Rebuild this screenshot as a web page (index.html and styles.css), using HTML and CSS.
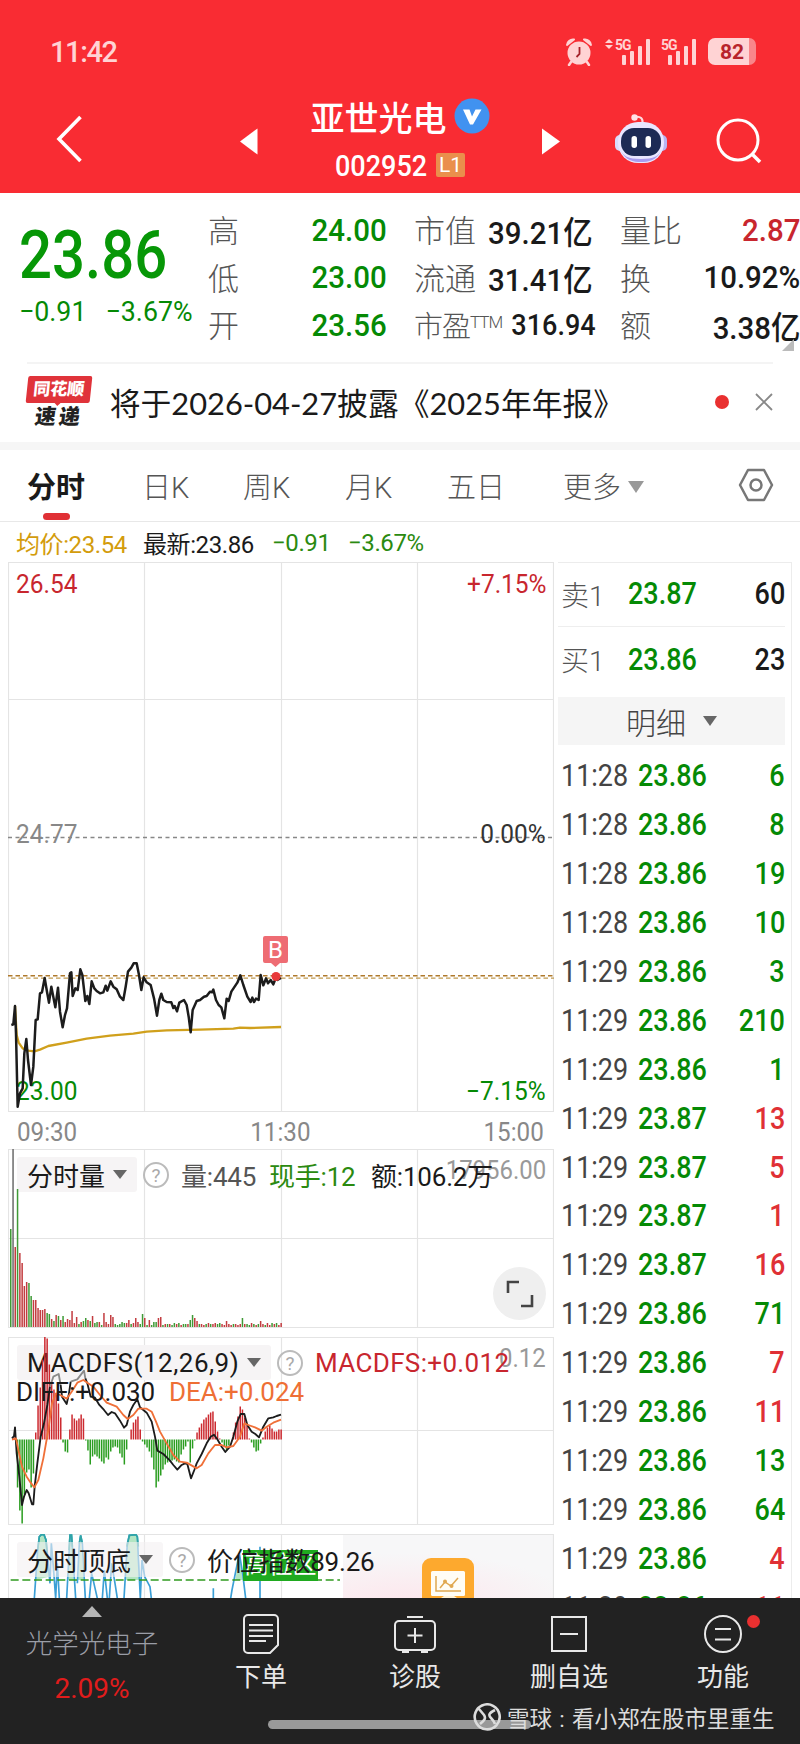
FILE: index.html
```html
<!DOCTYPE html>
<html lang="zh-CN">
<head>
  <meta charset="UTF-8">
  <title>亚世光电 002952</title>
  <link rel="stylesheet" href="styles.css">
</head>
<body>

<!-- header -->
<header class="top">
  <div class="status">
    <span class="clock">11:42</span>
    <svg class="alarm" width="28" height="28" viewBox="0 0 28 28">
      <circle cx="14" cy="15" r="11.500" fill="#ffd3d4"/>
      <path d="M2 7a6 6 0 0 1 7-5.500zM26 7a6 6 0 0 0-7-5.500z" fill="#ffd3d4" stroke="#ffd3d4" stroke-width="2" stroke-linejoin="round"/>
      <path d="M6 24l-2 3M22 24l2 3" stroke="#ffd3d4" stroke-width="2.500" stroke-linecap="round"/>
      <path d="M14.500 9v7l-3 3" stroke="#a5222a" stroke-width="1.800" fill="none"/>
    </svg>
    <svg class="signal" width="46" height="28" viewBox="0 0 46 28" fill="#ffd3d4">
      <path d="M0 5l4-4 4 4zM0 7l4 4 4-4z"/>
      <text x="10" y="11.500" class="net">5G</text>
      <rect x="17" y="17" width="4" height="10" rx="1"/><rect x="25" y="13" width="4" height="14" rx="1"/>
      <rect x="33" y="8" width="4" height="19" rx="1"/><rect x="41" y="1" width="4" height="26" rx="1"/>
    </svg>
    <svg class="signal second" width="36" height="28" viewBox="0 0 36 28" fill="#ffd3d4">
      <text x="0" y="11.500" class="net">5G</text>
      <rect x="7" y="17" width="4" height="10" rx="1"/><rect x="15" y="13" width="4" height="14" rx="1"/>
      <rect x="23" y="8" width="4" height="19" rx="1"/><rect x="31" y="1" width="4" height="26" rx="1"/>
    </svg>
    <div class="battery">82</div>
  </div>
  <nav class="nav">
    <svg class="back" width="26" height="48" viewBox="0 0 26 48"><path d="M24.500 2L3 24l21.500 22" fill="none" stroke="#fff" stroke-width="3.600"/></svg>
    <svg class="prev" width="18" height="27" viewBox="0 0 18 27"><path d="M0 13.500L17.500 0.500v26z" fill="#fff"/></svg>
    <div class="title">
      <div class="name">亚世光电
        <svg width="36" height="36" viewBox="0 0 36 36"><circle cx="18" cy="18" r="17.500" fill="#4192f0"/><path d="M9 11.500h6.500l2.500 7 3.500-7h6l-8.500 15h-3z" fill="#fff"/></svg>
      </div>
      <div class="code"><span class="code-num">002952</span><span class="level">L1</span></div>
    </div>
    <svg class="next" width="18" height="27" viewBox="0 0 18 27"><path d="M18 13.500L0 0.500v26z" fill="#fff"/></svg>
    <svg class="robot" width="54" height="52" viewBox="0 0 54 52">
      <path d="M28 12c2-7-2-9-7-8" fill="none" stroke="#ffd9df" stroke-width="2.200"/>
      <circle cx="20.500" cy="4.500" r="3.200" fill="#ffe3e8"/>
      <rect x="1" y="22" width="10" height="16" rx="5" fill="#d9dcfb"/><rect x="43" y="22" width="10" height="16" rx="5" fill="#b9b4f2"/>
      <rect x="4" y="9" width="46" height="41" rx="20" fill="#e9e6ff"/>
      <path d="M6 36c5 12 14 13 21 13s16-1 21-13c-3 7-8 10-21 10S9 43 6 36z" fill="#a99cf0"/>
      <rect x="7" y="15" width="40" height="28" rx="13" fill="#1d2a55"/>
      <rect x="17.500" y="23" width="5.500" height="12" rx="2.700" fill="#fff"/><rect x="31.500" y="23" width="5.500" height="12" rx="2.700" fill="#fff"/>
    </svg>
    <svg class="search" width="46" height="46" viewBox="0 0 46 46" fill="none" stroke="#fff" stroke-width="3"><circle cx="22" cy="22" r="20"/><path d="M36 36l8 8" stroke-width="3.600"/></svg>
  </nav>
</header>

<!-- quote -->
<section class="quote">
  <div class="last">
    <div class="price">23.86</div>
    <div class="change"><span>−0.91</span><span>−3.67%</span></div>
  </div>
  <div class="stats">
    <div><label>高</label><b class="green">24.00</b></div>
    <div><label>市值</label><b>39.21亿</b></div>
    <div><label>量比</label><b class="red">2.87</b></div>
    <div><label>低</label><b class="green">23.00</b></div>
    <div><label>流通</label><b>31.41亿</b></div>
    <div><label>换</label><b>10.92%</b></div>
    <div><label>开</label><b class="green">23.56</b></div>
    <div><label class="pe">市盈<sup>TTM</sup></label><b class="pev">316.94</b></div>
    <div><label>额</label><b>3.38亿</b></div>
  </div>
  <i class="corner"></i>
</section>

<!-- notice -->
<section class="notice">
  <div class="logo"><span class="logo-top">同花顺</span><span class="logo-sub">速递</span></div>
  <span class="msg">将于2026-04-27披露《2025年年报》</span>
  <i class="dot"></i>
  <svg class="close" width="18" height="18" viewBox="0 0 18 18"><path d="M1 1l16 16M17 1L1 17" stroke="#888" stroke-width="1.800"/></svg>
</section>

<!-- tabs -->
<section class="tabs">
  <span class="tab active">分时</span>
  <span class="tab">日K</span>
  <span class="tab">周K</span>
  <span class="tab">月K</span>
  <span class="tab">五日</span>
  <span class="tab">更多<i class="caret"></i></span>
  <svg width="36" height="34" viewBox="0 0 36 34" fill="none" stroke="#777" stroke-width="2.500"><path d="M10 2h16l8 15-8 15H10L2 17z" stroke-linejoin="round"/><circle cx="18" cy="17" r="5.500"/></svg>
</section>

<main class="main">
  <div class="charts">
    <div class="legend">
      <span class="gold">均价:23.54</span><span>最新:23.86</span><span class="lgreen">−0.91</span><span class="lgreen">−3.67%</span>
    </div>

    <!-- price -->
    <div class="panel price-panel">
      <svg width="546" height="550" viewBox="0 0 546 550">
        <path class="grid" d="M.5 0v550M136.500 0v550M273.500 0v550M409.500 0v550M545.500 0v550M0 .5h546M0 137.500h546M0 549.500h546"/>
        <path d="M0 275.500h546" stroke="#888" stroke-width="1.500" stroke-dasharray="4 3.500"/>
        <path d="M0 413.700h546" stroke="#b07a2c" stroke-width="1.500" stroke-dasharray="4.500 3"/>
        <path d="M3 416.200h543" stroke="#c09a50" stroke-width="1.200" stroke-dasharray="4.500 3"/>
      </svg>
      <span class="lab tl red">26.54</span>
      <span class="lab tr red">+7.15%</span>
      <span class="lab ml">24.77</span>
      <span class="lab mr">0.00%</span>
      <span class="lab bl dgreen">23.00</span>
      <span class="lab br dgreen">−7.15%</span>
      <svg class="over" width="546" height="550" viewBox="0 0 546 550">
        <g transform="translate(-8 358) scale(.33333)" fill="none" stroke-linejoin="round">
          <polyline stroke="#d0a01c" stroke-width="7" points="45,258 50,345 56,368 68,385 85,392 103,394 120,389 145,378 200,368 260,356 330,347 400,341 440,335 500,331 600,329 700,326 720,323 750,324 843,321"/>
          <polyline stroke="#1c1c1c" stroke-width="7.500" points="34,315 40,313 45,258 48,340 53,560 60,520 68,505 73,400 79,357 84,420 93,495 100,440 107,300 113,298 120,220 126,217 134,174 141,215 147,248 154,200 166,262 174,203 180,275 188,322 195,285 201,265 210,160 214,157 218,228 226,205 233,210 241,148 247,165 256,243 262,228 268,252 275,184 283,205 290,213 300,220 310,217 317,197 322,212 332,184 340,200 350,208 360,230 370,240 377,200 384,155 394,143 401,130 410,130 417,165 424,210 431,172 440,187 452,195 462,235 471,287 478,240 484,221 490,240 500,246 514,247 520,264 524,258 531,274 538,248 552,240 560,255 566,290 572,337 578,270 590,243 600,240 612,230 620,228 630,215 636,217 640,209 648,240 656,255 664,262 673,295 680,236 686,243 694,215 702,203 712,188 721,166 730,195 742,230 752,246 757,233 762,246 768,236 776,240 782,165 790,196 798,175 804,190 812,180 820,193 828,172 832,180 843,174"/>
        </g>
        <path d="M257 374h21a2 2 0 0 1 2 2v23a2 2 0 0 1-2 2h-6l-4.500 4-4.500-4h-6a2 2 0 0 1-2-2v-23a2 2 0 0 1 2-2z" fill="#ee6c73"/>
        <text x="267.500" y="396" class="flag">B</text>
        <circle cx="268" cy="414.500" r="4.500" fill="#e8393a"/>
      </svg>
    </div>
    <div class="axis"><span>09:30</span><span>11:30</span><span>15:00</span></div>

    <!-- volume -->
    <div class="panel vol-panel">
      <svg width="546" height="179" viewBox="0 0 546 179">
        <path class="grid" d="M.5 0v179M136.500 0v179M273.500 0v179M409.500 0v179M545.500 0v179M0 .5h546M0 89.500h546M0 178.500h546"/>
      </svg>
      <span class="max">17956.00</span>
      <div class="head">
        <span class="chip">分时量<i class="caret"></i></span>
        <span class="help">?</span>
        <span class="txt v1">量:445</span><span class="txt v2 lgreen">现手:12</span><span class="txt v3">额:106.2万</span>
      </div>
      <svg class="over" width="546" height="179" viewBox="0 0 546 179"><g id="volBars"></g></svg>
      <div class="expand"><svg width="28" height="28" viewBox="0 0 28 28" fill="none" stroke="#444" stroke-width="2.600"><path d="M2 13V2h11M26 15v11H15"/></svg></div>
    </div>

    <!-- macd -->
    <div class="panel macd-panel">
      <svg width="546" height="188" viewBox="0 0 546 188">
        <path class="grid" d="M.5 0v188M136.500 0v188M273.500 0v188M409.500 0v188M545.500 0v188M0 .5h546M0 93.500h546M0 187.500h546"/>
      </svg>
      <span class="max">0.12</span>
      <div class="head">
        <span class="chip macd-chip">MACDFS(12,26,9)<i class="caret"></i></span>
        <span class="help">?</span>
        <span class="txt m1 red">MACDFS:+0.012</span>
      </div>
      <svg class="over" width="546" height="188" viewBox="0 0 546 188">
        <g id="macdBars"></g>
        <g transform="translate(-8 -7) scale(.33333)" fill="none" stroke-linejoin="round" stroke-width="5.500">
          <polyline stroke="#1c1c1c" points="36,325 42,318 45,292 50,370 58,440 66,525 72,500 80,480 86,490 96,523 100,523 104,470 112,400 122,320 132,280 142,225 150,170"/>
          <polyline stroke="#8a8a8a" points="150,170 160,140 176,132 182,165"/>
          <polyline stroke="#1c1c1c" points="182,165 186,200 200,222 207,190 212,155"/>
          <polyline stroke="#8a8a8a" points="212,155 232,148 252,122 256,145"/>
          <polyline stroke="#1c1c1c" points="256,145 262,160 272,200 285,203 298,225 312,240 324,255 335,246 345,250 360,272 372,293 380,285 390,245 400,225 412,208 420,232 440,248 455,275 465,320 472,362 490,372 510,392 520,405 532,419 545,405 555,400 562,402 573,445 583,420 590,400 605,372 620,340 632,320 642,314 652,328 665,350 676,366 690,350 700,320 712,275 722,252 733,252 742,285 755,305 766,312 777,322 790,290 805,265 820,262 830,258 843,254"/>
          <polyline stroke="#f07038" points="36,329 48,325 55,360 66,410 80,440 92,458 103,472 115,450 130,385 145,300 156,220 168,190 180,195 200,206 215,185 232,158 250,150 262,158 280,170 300,195 320,218 350,230 370,255 383,267 400,255 415,236 440,236 455,245 468,275 480,305 500,340 520,375 540,395 560,398 590,415 605,405 625,370 645,345 665,345 680,352 700,348 720,320 733,280 745,285 765,292 785,302 800,290 820,278 843,269"/>
        </g>
      </svg>
      <div class="sub"><span class="d1">DIFF:+0.030</span><span class="d2">DEA:+0.024</span></div>
    </div>

    <!-- top / bottom index -->
    <div class="panel idx-panel">
      <svg width="546" height="64" viewBox="0 0 546 64">
        <defs>
          <radialGradient id="pink" cx=".3" cy="1.1" r=".8"><stop offset="0" stop-color="#fde6ec"/><stop offset="1" stop-color="#f7f7f8"/></radialGradient>
        </defs>
        <rect x="335" y="0" width="211" height="64" fill="url(#pink)"/>
        <path class="grid" d="M.5 0v64M136.500 0v64M273.500 0v64M545.500 0v64M0 .5h546"/>
        <rect x="414" y="24" width="52" height="60" rx="9" fill="#fda92e"/>
        <rect x="423" y="37" width="34" height="25" rx="1.500" fill="#fffdf5"/>
        <path d="M428 42v15h25M432 54l5-6 6 4 7-8" fill="none" stroke="#e0a850" stroke-width="1.500"/>
        <circle cx="437" cy="47.500" r="2" fill="#e0a850"/><circle cx="443.500" cy="52" r="2" fill="#e0a850"/>
        <path d="M433 64l3-2h10l3 2z" fill="#fff3d8"/>
      </svg>
      <svg class="over" width="546" height="64" viewBox="0 0 546 64">
        <g transform="translate(-8 -204) scale(.33333)" fill="none" stroke-width="5">
          <path d="M106 750L118 620l6-6h8l6 16 10 110zM203 750l7-135h6l5 135zM233 750l9-134 9 134zM376 750l8-125 6-11h18l6 8 6 128zM706 750l12-80 12 80z" fill="#7fd39a" fill-opacity=".6"/>
          <path d="M103 805l10-145 5-40 6-6h8l6 16 12 130 4-120 6 70 7 95 5-105 6 105M200 805l10-190h4l3 35 10 155M232 760l6-120 4-24 5 24 9 165M268 805l7-75 9 40 8 35M307 805l6-85 9 85M328 805l7-105 10 60 7 45M372 805l10-165 6-24 20-2 4 6 9 185M421 805l5-115 8 50 16 30 4 35M640 775v30M692 805l4-25 16-80 6-30 10 60 9 75M780 805V650" stroke="#3b9fd6"/>
          <path d="M113 660l5-40 6-6h8l6 16 4 40M207 660l3-45h5l2 35M238 640l4-24 5 24M381 650l7-34 20-2 4 6 3 30" stroke="#2fa5a5"/>
          <path d="M32 750h988" stroke="#2f9a1f" stroke-dasharray="24 11"/>
        </g>
      </svg>
      <span class="zone">高位区</span>
      <div class="head">
        <span class="chip idx-chip">分时顶底<i class="caret"></i></span>
        <span class="help">?</span>
        <span class="txt i1">价位指数89.26</span>
      </div>
    </div>
  </div>

  <!-- order book and ticks -->
  <aside class="side">
    <div class="book"><span>卖1</span><b>23.87</b><em>60</em></div>
    <div class="book"><span>买1</span><b>23.86</b><em>23</em></div>
    <div class="detail">明细<i class="caret"></i></div>
    <div class="ticks" id="ticks"></div>
  </aside>
</main>

<!-- bottom bar -->
<footer class="bottom">
  <div class="sector"><i class="up"></i><span>光学光电子</span><b>2.09%</b></div>
  <div class="item">
    <svg width="36" height="40" viewBox="0 0 36 40" fill="none" stroke="#e8e8e8" stroke-width="2"><path d="M5 1h26a4 4 0 0 1 4 4v26l-8 8H5a4 4 0 0 1-4-4V5a4 4 0 0 1 4-4zM6 11h24M6 16.500h24M6 22h24M6 27h17"/></svg>
    <span>下单</span>
  </div>
  <div class="item">
    <svg width="42" height="40" viewBox="0 0 42 40" fill="none" stroke="#e8e8e8" stroke-width="2"><path d="M13 3h16" /><rect x="1" y="7" width="40" height="29" rx="4"/><path d="M21 14v15M13.500 21.500h15M8 38h7M27 38h7"/></svg>
    <span>诊股</span>
  </div>
  <div class="item">
    <svg width="36" height="40" viewBox="0 0 36 40" fill="none" stroke="#e8e8e8" stroke-width="2"><rect x="1" y="3" width="34" height="34"/><path d="M9 20h18"/></svg>
    <span>删自选</span>
  </div>
  <div class="item">
    <svg width="38" height="40" viewBox="0 0 38 40" fill="none" stroke="#e8e8e8" stroke-width="2"><circle cx="19" cy="20" r="18"/><path d="M11 15h16M11 25.500h16"/></svg>
    <span>功能</span>
    <i class="badge"></i>
  </div>
  <i class="homebar"></i>
  <div class="mark">
    <svg width="28" height="28" viewBox="0 0 28 28" fill="none" stroke="#dcdcdc" stroke-width="2.600"><path d="M9 2.500a12.500 12.500 0 1 1-6.500 7M9 2.500a12.500 12.500 0 0 0-6.500 7M6 6l5 6c2 3 1 5-4 9M22 7c-6 3-7 5-4 8 2 2 3 3 4 6"/></svg>
    <span>雪球<i>:</i>看小郑在股市里重生</span>
  </div>
</footer>

<script src="script.js"></script>
</body>
</html>
```
FILE: styles.css
```css
* { box-sizing: border-box; }
body {
  margin: 0;
  width: 800px;
  height: 1744px;
  overflow: hidden;
  display: flex;
  flex-direction: column;
  background: #fff;
  color: #1a1a1a;
  font-family: Roboto, "Noto Sans CJK SC", sans-serif;
}
i, em { font-style: normal; }
svg { display: block; flex: none; }

.red { color: #c8262e !important; }
.green, .dgreen { color: #058a05 !important; }
.lgreen { color: #2b8a10 !important; }
.gold { color: #d39c0c; }
.caret {
  display: inline-block;
  border: 7px solid transparent;
  border-top: 9px solid #666;
  border-bottom: 0;
}

/* header */
.top { height: 193px; background: #f92c33; color: #fff; flex: none; }
.status {
  display: flex;
  align-items: center;
  height: 75px;
  padding: 28px 44px 0 50px;
}
.clock { font-size: 29px; font-weight: 500; color: #ffd3d4; letter-spacing: -1.4px; width: 515px; }
.net { font: bold 14px Roboto, sans-serif; letter-spacing: -1px; }
.signal { margin-left: 12px; }
.signal.second { margin-left: 10px; }
.battery {
  margin-left: 11px;
  width: 48px;
  height: 27px;
  border-radius: 7px;
  background: linear-gradient(90deg, #ffd3d4 41px, #f9868a 41px);
  color: #b8232b;
  font-size: 21px;
  font-weight: 700;
  line-height: 28px;
  text-align: center;
}
.nav { display: flex; align-items: center; height: 118px; padding: 14px 0 0 56px; }
.back { margin-top: -4px; }
.prev { margin-left: 158px; }
.title { width: 284px; text-align: center; }
.name {
  display: flex;
  justify-content: center;
  align-items: center;
  gap: 7px;
  font-size: 34px;
  font-weight: 500;
  height: 48px;
}
.code { display: flex; justify-content: center; align-items: center; font-size: 30px; font-weight: 500; height: 50px; }
.code-num { width: 91px; transform: scaleX(0.9); transform-origin: left; }
.level {
  margin-left: 10px;
  width: 29px;
  height: 24px;
  border-radius: 2px;
  background: #ea8f4c;
  font-size: 21px;
  font-weight: 400;
  line-height: 25px;
}
.robot { margin: -4px 0 0 54px; }
.search { margin-left: 48px; }

/* quote */
.quote { position: relative; display: flex; height: 169px; flex: none; }
.last { width: 208px; padding: 24px 0 0 19px; color: #079707; white-space: nowrap; }
.price { font-size: 66px; line-height: 78px; font-weight: 500; transform: scaleX(0.88); transform-origin: left; }
.change { display: flex; gap: 20px; font-size: 28px; line-height: 34px; color: #058a05; transform: scaleX(0.955); transform-origin: left; }
.stats {
  display: grid;
  grid-template-columns: 179px 179px 180px;
  grid-auto-rows: 47.5px;
  column-gap: 27px;
  padding-top: 13px;
}
.stats div { display: flex; justify-content: space-between; align-items: center; white-space: nowrap; }
.stats label { font-size: 31px; font-weight: 300; color: #555; margin-top: -2px; }
.stats b { font-size: 32px; font-weight: 500; transform: scaleX(0.92); transform-origin: right; }
.stats .pe { font-size: 29px; letter-spacing: -1px; }
.stats .pev { font-size: 30px; transform: scaleX(0.9); }
.pe sup { font-size: 17px; vertical-align: 9px; line-height: 0; }
.corner {
  position: absolute;
  right: 6px;
  bottom: 11px;
  border: 6px solid #bbb;
  border-top-color: transparent;
  border-left-color: transparent;
}

/* notice */
.notice {
  display: flex;
  align-items: center;
  height: 80px;
  margin: 0 27px;
  padding-bottom: 3px;
  border-top: 2px solid #f4f4f4;
  flex: none;
}
.logo { display: flex; flex-direction: column; width: 64px; margin: 4px 19px 0 0; }
.logo-top {
  position: relative;
  background: #e0333a;
  color: #fff;
  font-size: 17px;
  font-weight: 900;
  line-height: 27px;
  height: 27px;
  text-align: center;
  transform: skewX(-6deg);
  border-radius: 2px;
}
.logo-top::after {
  content: "";
  position: absolute;
  left: 28px;
  top: 26px;
  border: 4px solid transparent;
  border-top-color: #e0333a;
  border-bottom: 0;
}
.logo-sub { font-size: 21px; font-weight: 900; line-height: 28px; text-align: center; letter-spacing: 3px; transform: skewX(-8deg); color: #222; }
.msg { font: 30.8px Lato, "Noto Sans CJK SC", sans-serif; width: 608px; white-space: nowrap; font-weight: 400; }
.dot { width: 14px; height: 14px; border-radius: 50%; background: #e93030; }
.close { margin-left: 26px; }

/* tabs */
.tabs {
  display: flex;
  align-items: center;
  height: 80px;
  border-top: 8px solid #f6f6f6;
  border-bottom: 1px solid #e8e8e8;
  padding: 0 0 1px 27px;
  font-size: 29px;
  font-weight: 300;
  color: #555;
  flex: none;
}
.tab { position: relative; white-space: nowrap; }
.tab.active { font-weight: 700; color: #1a1a1a; width: 115px; }
.tab.active::after {
  content: "";
  position: absolute;
  left: 16px;
  bottom: -14px;
  width: 27px;
  height: 7px;
  border-radius: 4px;
  background: #e03035;
}
.tab:nth-child(2) { width: 101px; }
.tab:nth-child(3) { width: 102px; }
.tab:nth-child(4) { width: 102px; }
.tab:nth-child(5) { width: 116px; }
.tab:nth-child(6) { width: 175px; }
.tab .caret { border-width: 12px 8px 0; border-top-color: #999; margin-left: 7px; vertical-align: 5px; }

/* charts */
.main { display: flex; height: 1076px; overflow: hidden; flex: none; }
.charts { width: 554px; padding-left: 8px; flex: none; }
.legend { display: flex; align-items: center; height: 40px; padding: 1px 0 0 8px; font-size: 24px; letter-spacing: -0.4px; white-space: nowrap; }
.legend span:nth-child(1) { width: 127px; }
.legend span:nth-child(2) { width: 129px; }
.legend span:nth-child(3) { width: 76px; }
.panel { position: relative; width: 546px; }
.over { position: absolute; left: 0; top: 0; }
.grid { fill: none; stroke: #e4e4e4; stroke-width: 1.2; }
.price-panel { height: 550px; }
.vol-panel { height: 179px; margin-bottom: 9px; }
.macd-panel { height: 188px; margin-bottom: 9px; }
.idx-panel { height: 64px; }
.lab { position: absolute; font-size: 26px; line-height: 30px; transform: scaleX(0.94); transform-origin: left; }
.tl { left: 8px; top: 7px; }
.tr { right: 8px; top: 7px; transform-origin: right; }
.ml { left: 8px; top: 257px; color: #888; }
.mr { right: 8px; top: 257px; color: #333; transform-origin: right; }
.bl { left: 8px; bottom: 6px; }
.br { right: 8px; bottom: 6px; transform-origin: right; }
.flag { font: 24px Roboto, sans-serif; fill: #fff; text-anchor: middle; }
.axis {
  display: flex;
  justify-content: space-between;
  align-items: center;
  height: 37px;
  padding: 2px 10px 0 9px;
  font-size: 26px;
  color: #888;
}
.axis span { transform: scaleX(0.93); }
.axis span:first-child { transform-origin: left; }
.axis span:last-child { transform-origin: right; }
.head { position: absolute; left: 9px; top: 8px; display: flex; align-items: center; height: 35px; white-space: nowrap; }
.chip {
  display: flex;
  align-items: center;
  width: 120px;
  height: 35px;
  padding-left: 10px;
  border-radius: 3px;
  background: #f6f4f5;
  font-size: 26px;
}
.chip .caret { margin-left: 8px; }
.help {
  width: 26px;
  height: 26px;
  margin-left: 6px;
  border: 2px solid #bbb;
  border-radius: 50%;
  color: #aaa;
  font-size: 19px;
  line-height: 23px;
  text-align: center;
}
.txt { font-size: 26px; letter-spacing: -0.2px; }
.v1 { margin-left: 12px; width: 88px; color: #555; }
.v2 { width: 102px; }
.max { position: absolute; right: 8px; top: 6px; font-size: 26px; line-height: 30px; color: #999; transform: scaleX(0.92); transform-origin: right; }
.expand {
  position: absolute;
  right: 8px;
  bottom: 8px;
  display: flex;
  justify-content: center;
  align-items: center;
  width: 53px;
  height: 53px;
  border-radius: 50%;
  background: #efefef;
}
.macd-chip { width: 254px; letter-spacing: 0.5px; }
.m1 { margin-left: 12px; letter-spacing: 0.35px; }
.sub { position: absolute; left: 8px; top: 40px; display: flex; font-size: 26px; line-height: 30px; }
.d1 { width: 153px; }
.d2 { color: #ee6f35; }
.idx-chip { width: 146px; background: rgba(244, 240, 242, 0.6); }
.idx-chip .caret { margin-left: 8px; }
.help + .i1 { margin-left: 12px; }
.zone {
  position: absolute;
  left: 235px;
  top: 16px;
  width: 75px;
  height: 31px;
  background: #1faa1f;
  color: #fff;
  font-size: 24px;
  line-height: 30px;
  text-align: center;
}

/* right column */
.side { width: 234px; margin: 40px 0 0 4px; border-top: 1px solid #ececec; border-right: 1px solid #ececec; padding-right: 6px; flex: none; }
.book {
  display: flex;
  align-items: center;
  height: 64px;
  padding: 0 0 2px 3px;
  border-bottom: 1px solid #eee;
}
.book:nth-child(2) { border: 0; height: 66px; }
.book span { width: 67px; font-size: 28px; font-weight: 300; color: #555; }
.book b, .book em, .tick span, .tick b, .tick em { font-size: 31px; font-weight: 500; transform: scaleX(0.87); transform-origin: left; }
.book b, .tick b { color: #058a05; }
.book em, .tick em { margin-left: auto; transform-origin: right; }
.detail {
  display: flex;
  justify-content: center;
  align-items: center;
  gap: 17px;
  width: 227px;
  height: 48px;
  margin: 4px 0 6px;
  padding-bottom: 1px;
  background: #f5f5f5;
  font-size: 30px;
  font-weight: 300;
  color: #444;
}
.detail .caret { border-top-width: 10px; }
.tick { display: flex; align-items: center; height: 48.9px; padding: 1px 0 0 3px; white-space: nowrap; }
.tick span { width: 77px; color: #444; font-weight: 400; }
.tick em { color: #058a05; }
.tick em.up { color: #e03035; }

/* bottom bar */
.bottom { position: relative; display: flex; height: 147px; background: #222; color: #e8e8e8; flex: none; }
.sector { width: 184px; display: flex; flex-direction: column; align-items: center; padding-top: 8px; }
.sector .up { border: 10px solid transparent; border-top: 0; border-bottom: 11px solid #b5b5b5; }
.sector span { margin-top: 9px; font-size: 26.5px; line-height: 36px; font-weight: 300; color: #9a9da6; }
.sector b { margin-top: 8px; font-size: 28px; line-height: 38px; font-weight: 400; color: #e01c1c; }
.item { position: relative; width: 154px; display: flex; flex-direction: column; align-items: center; padding-top: 16px; }
.item span { margin-top: 5px; font-size: 26px; line-height: 36px; }
.badge { position: absolute; left: 101px; top: 17px; width: 13px; height: 13px; border-radius: 50%; background: #e93030; }
.homebar { position: absolute; left: 268px; top: 122px; width: 263px; height: 9px; border-radius: 5px; background: #999; }
.mark {
  position: absolute;
  left: 473px;
  top: 103px;
  display: flex;
  align-items: center;
  gap: 6px;
  height: 32px;
  font-size: 22.5px;
  color: #dcdcdc;
  white-space: nowrap;
}
.mark span i { display: inline-block; width: 20px; text-align: center; }
```
FILE: script.js
```js
const R = "#c23c40", G = "#3f9a36", D = "#6b6b6b";
const STEP = 2.272;

// minute volume: height in px, sign gives the direction
const vol = [
  -98, 178, 80, -138, 74, 64, 41, 45, -44, -31, 27, 27, 19, 17, 17, 18, -14, -13, 8, -6,
  12, -11, 7, -11, 5, 8, 7, 16, 4, 10, -3, 5, -6, -9, 7, -6, 11, -4, -5, 5,
  -2, 14, 5, 3, 12, 10, -3, -2, -3, -5, -4, 4, 7, -3, 4, 9, 5, -3, -13, 9,
  -2, 7, -2, -5, -5, 9, 10, -2, 3, -3, 3, -2, -4, 3, -4, 2, -3, -3, 3, -7,
  -12, 9, 6, -3, 3, 2, -3, 4, -3, 3, 4, -3, -4, 3, 2, 6, 3, 2, -3, 3,
  2, 3, -9, 3, -3, -2, 4, -3, 2, -3, 6, 3, -2, 4, 2, -4, 3, -4, 2, 4
];

const macd = [
  0, 1, 12, -48, -71, -84, -55, -33, -30, -48, -34, 7, 34, 52, 80, 103, 101, 75, 58, 50,
  46, 36, 22, -3, -12, -13, 10, 25, 21, 19, 21, 25, 21, -1, -11, -25, -17, -15, -17, -19,
  -22, -24, -18, -20, -12, -8, -7, -8, -14, -18, -25, -10, 0, 10, 17, 20, 23, 10, -2, -5,
  -8, -12, -18, -30, -48, -42, -36, -30, -25, -23, -22, -21, -20, -22, -23, -15, -10, -7, -2, -23,
  -9, -1, 7, 12, 16, 20, 22, 25, 27, 28, 18, 8, 1, -3, -7, -11, -6, 0, 7, 17,
  23, 33, 30, 22, 14, 1, -3, -8, -12, -11, -4, 2, 8, 12, 14, 11, 8, 8, 10, 10
];

const rect = (x, y, h, c) => `<rect x="${x.toFixed(1)}" y="${y}" width="1.5" height="${h}" fill="${c}"/>`;

document.getElementById("volBars").innerHTML = vol.map((v, i) =>
  rect(2 + i * STEP, 178 - Math.abs(v), Math.abs(v), i === 1 ? D : v > 0 ? R : G)
).join("");

document.getElementById("macdBars").innerHTML = macd.map((v, i) =>
  rect(2 + i * STEP, v > 0 ? 102.5 - v : 102.5, Math.abs(v), v > 0 ? "#cc2a30" : "#2a9d20")
).join("");

// [time, price, hands, up]
const ticks = [
  ["11:28", "23.86", 6], ["11:28", "23.86", 8], ["11:28", "23.86", 19], ["11:28", "23.86", 10],
  ["11:29", "23.86", 3], ["11:29", "23.86", 210], ["11:29", "23.86", 1], ["11:29", "23.87", 13, 1],
  ["11:29", "23.87", 5, 1], ["11:29", "23.87", 1, 1], ["11:29", "23.87", 16, 1], ["11:29", "23.86", 71],
  ["11:29", "23.86", 7, 1], ["11:29", "23.86", 11, 1], ["11:29", "23.86", 13], ["11:29", "23.86", 64],
  ["11:29", "23.86", 4, 1], ["11:29", "23.86", 11, 1]
];
document.getElementById("ticks").innerHTML = ticks.map(t =>
  `<div class="tick"><span>${t[0]}</span><b>${t[1]}</b><em class="${t[3] ? "up" : ""}">${t[2]}</em></div>`
).join("");
```
